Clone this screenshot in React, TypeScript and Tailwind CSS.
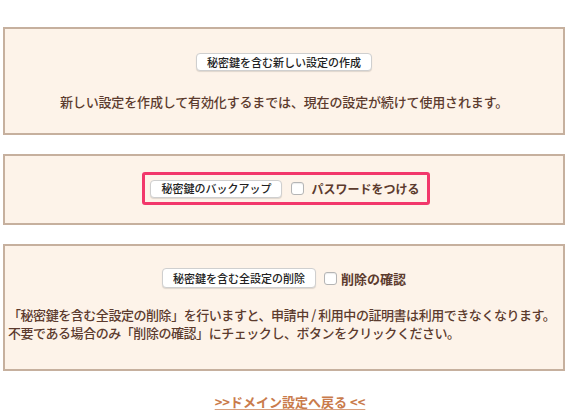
import React from 'react';

const Btn: React.FC<{ children: React.ReactNode; className?: string }> = ({ children, className = '' }) => (
  <button
    type="button"
    className={`h-[18px] px-[10px] bg-white border border-[#cfcfcf] rounded-[4px] shadow-[0_1px_1px_rgba(0,0,0,0.12)] text-[11px] leading-none font-medium text-[#222] ${className}`}
  >
    {children}
  </button>
);

const Check: React.FC = () => (
  <span className="inline-block w-[13px] h-[13px] bg-white border border-[#b5b5b5] rounded-[3px] shadow-[inset_0_1px_1px_rgba(0,0,0,0.08)]"></span>
);

export default function App() {
  return (
    <div className="min-h-[420px] bg-white pt-[27px] font-['Noto_Sans_CJK_JP','Noto_Sans',sans-serif] text-[#5c3b2e]">
      <div className="ml-[3px] w-[562px] flex flex-col gap-[19px]">
        {/* 新しい設定の作成 */}
        <div className="h-[108px] border-2 border-[#c6b09e] bg-[#fdf3e9] pt-[24px] flex flex-col items-center">
          <Btn>秘密鍵を含む新しい設定の作成</Btn>
          <p className="mt-[22px] text-[13px] leading-[18px] font-medium tracking-[-0.15px]">
            新しい設定を作成して有効化するまでは、現在の設定が続けて使用されます。
          </p>
        </div>

        {/* バックアップ */}
        <div className="h-[71px] border-2 border-[#c6b09e] bg-[#fdf3e9] pt-[16px] flex justify-center pl-[4px]">
          <div className="h-[33px] flex items-center border-[3px] border-[#f2376b] rounded-[3px] pl-[5px] pr-[7px]">
            <Btn>秘密鍵のバックアップ</Btn>
            <span className="ml-[9px] flex"><Check /></span>
            <span className="ml-[7px] text-[12px] font-bold leading-none">パスワードをつける</span>
          </div>
        </div>

        {/* 全設定の削除 */}
        <div className="h-[127px] border-2 border-[#c6b09e] bg-[#fdf3e9] pt-[22px] px-[3px]">
          <div className="flex items-center justify-center">
            <Btn className="h-[20px]">秘密鍵を含む全設定の削除</Btn>
            <span className="ml-[8px] flex"><Check /></span>
            <span className="ml-[4px] text-[13px] font-bold leading-none">削除の確認</span>
          </div>
          <p className="mt-[18px] text-[13px] leading-[18px] font-medium tracking-[-0.45px]">
            「秘密鍵を含む全設定の削除」を行いますと、申請中 / 利用中の証明書は利用できなくなります。
            <br />
            不要である場合のみ「削除の確認」にチェックし、ボタンをクリックください。
          </p>
        </div>
      </div>

      <div className="mt-[22px] text-center text-[13px] leading-[18px]">
        <a href="#" className="font-bold text-[#c97b4b] underline decoration-[#d9a07e] underline-offset-2 pl-[8px]">
          &gt;&gt;ドメイン設定へ戻る &lt;&lt;
        </a>
      </div>
    </div>
  );
}
